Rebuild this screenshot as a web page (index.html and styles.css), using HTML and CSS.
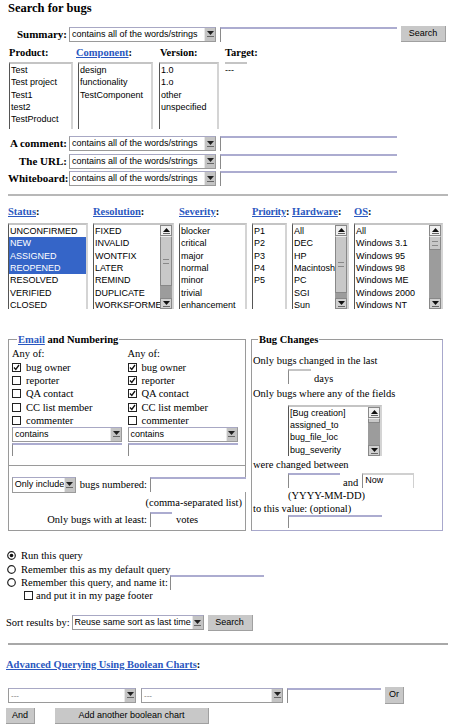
FILE: index.html
```html
<!DOCTYPE html>
<html>
<head>
<meta charset="utf-8">
<title>Search for bugs</title>
<link rel="stylesheet" href="styles.css">
</head>
<body>
<div class="page">
  <h1 class="title">Search for bugs</h1>

  <div class="row r-sum">
    <span class="lbl">Summary:</span>
    <div class="sel w147"><span class="v">contains all of the words/strings</span><span class="a"><svg width="7" height="6" viewBox="0 0 7 6"><path d="M0 0h7L3.5 4z" fill="#222"/><path d="M0 5.5h7" stroke="#666"/></svg></span></div>
    <div class="inp w177"></div>
    <div class="btn w45">Search</div>
  </div>

  <div class="prod">
    <div class="h pl1">Product:</div>
    <div class="h"><a class="lnk">Component</a>:</div>
    <div class="h pl1">Version:</div>
    <div class="h">Target:</div>
    <div class="lb ml1 w64 hp"><div>Test</div><div>Test project</div><div>Test1</div><div>test2</div><div>TestProduct</div></div>
    <div class="lb ml2 w75 hp"><div>design</div><div>functionality</div><div>TestComponent</div></div>
    <div class="lb w60 hp"><div>1.0</div><div>1.o</div><div>other</div><div>unspecified</div></div>
    <div class="lb lbt w22"><div>---</div></div>
  </div>

  <div class="frows">
    <div class="row">
      <span class="lbl">A comment:</span>
      <div class="sel w147"><span class="v">contains all of the words/strings</span><span class="a"><svg width="7" height="6" viewBox="0 0 7 6"><path d="M0 0h7L3.5 4z" fill="#222"/><path d="M0 5.5h7" stroke="#666"/></svg></span></div>
      <div class="inp w177"></div>
    </div>
    <div class="row">
      <span class="lbl">The URL:</span>
      <div class="sel w147"><span class="v">contains all of the words/strings</span><span class="a"><svg width="7" height="6" viewBox="0 0 7 6"><path d="M0 0h7L3.5 4z" fill="#222"/><path d="M0 5.5h7" stroke="#666"/></svg></span></div>
      <div class="inp w177"></div>
    </div>
    <div class="row">
      <span class="lbl">Whiteboard:</span>
      <div class="sel w147"><span class="v">contains all of the words/strings</span><span class="a"><svg width="7" height="6" viewBox="0 0 7 6"><path d="M0 0h7L3.5 4z" fill="#222"/><path d="M0 5.5h7" stroke="#666"/></svg></span></div>
      <div class="inp w177"></div>
    </div>
  </div>

  <div class="hr"></div>

  <div class="stat">
    <div class="scol w80">
      <div class="h"><a class="lnk">Status</a>:</div>
      <div class="lb hs">
        <div>UNCONFIRMED</div><div class="selr">NEW</div><div class="selr">ASSIGNED</div><div class="selr">REOPENED</div><div>RESOLVED</div><div>VERIFIED</div><div>CLOSED</div>
      </div>
    </div>
    <div class="scol w81">
      <div class="h"><a class="lnk">Resolution</a>:</div>
      <div class="lb hs sbx">
        <div class="items"><div>FIXED</div><div>INVALID</div><div>WONTFIX</div><div>LATER</div><div>REMIND</div><div>DUPLICATE</div><div>WORKSFORME</div></div>
        <div class="sb"><div class="up"><svg width="7" height="6" viewBox="0 0 7 6"><path d="M0 4h7L3.5 0z" fill="#111"/><path d="M0 5.5h7" stroke="#666"/></svg></div><div class="th th-res"><span class="grip"></span></div><div class="tr"></div><div class="dn"><svg width="7" height="6" viewBox="0 0 7 6"><path d="M0 0h7L3.5 4z" fill="#111"/><path d="M0 5.5h7" stroke="#666"/></svg></div></div>
      </div>
    </div>
    <div class="scol w68">
      <div class="h"><a class="lnk">Severity</a>:</div>
      <div class="lb hs"><div>blocker</div><div>critical</div><div>major</div><div>normal</div><div>minor</div><div>trivial</div><div>enhancement</div></div>
    </div>
    <div class="scol w35">
      <div class="h"><a class="lnk">Priority</a>:</div>
      <div class="lb hs"><div>P1</div><div>P2</div><div>P3</div><div>P4</div><div>P5</div></div>
    </div>
    <div class="scol w57">
      <div class="h"><a class="lnk">Hardware</a>:</div>
      <div class="lb hs sbx">
        <div class="items"><div>All</div><div>DEC</div><div>HP</div><div>Macintosh</div><div>PC</div><div>SGI</div><div>Sun</div></div>
        <div class="sb"><div class="up"><svg width="7" height="6" viewBox="0 0 7 6"><path d="M0 4h7L3.5 0z" fill="#111"/><path d="M0 5.5h7" stroke="#666"/></svg></div><div class="th th-hw"><span class="grip"></span></div><div class="tr"></div><div class="dn"><svg width="7" height="6" viewBox="0 0 7 6"><path d="M0 0h7L3.5 4z" fill="#111"/><path d="M0 5.5h7" stroke="#666"/></svg></div></div>
      </div>
    </div>
    <div class="scol w89">
      <div class="h"><a class="lnk">OS</a>:</div>
      <div class="lb hs sbx">
        <div class="items"><div>All</div><div>Windows 3.1</div><div>Windows 95</div><div>Windows 98</div><div>Windows ME</div><div>Windows 2000</div><div>Windows NT</div></div>
        <div class="sb"><div class="up"><svg width="7" height="6" viewBox="0 0 7 6"><path d="M0 4h7L3.5 0z" fill="#111"/><path d="M0 5.5h7" stroke="#666"/></svg></div><div class="th th-os"><span class="grip"></span></div><div class="tr"></div><div class="dn"><svg width="7" height="6" viewBox="0 0 7 6"><path d="M0 0h7L3.5 4z" fill="#111"/><path d="M0 5.5h7" stroke="#666"/></svg></div></div>
      </div>
    </div>
  </div>

  <div class="fsrow">
    <fieldset class="fs fs1">
      <legend><a class="lnk">Email</a> and Numbering</legend>
      <div class="ecols">
        <div class="ecol">
          <div class="any">Any of:</div>
          <div class="cb"><span class="box"><svg width="9" height="9" viewBox="0 0 9 9"><path d="M2 4.5l1.8 2L7 2" fill="none" stroke="#111" stroke-width="1.3"/></svg></span>bug owner</div>
          <div class="cb"><span class="box"></span>reporter</div>
          <div class="cb"><span class="box"></span>QA contact</div>
          <div class="cb"><span class="box"></span>CC list member</div>
          <div class="cb"><span class="box"></span>commenter</div>
          <div class="sel w110"><span class="v">contains</span><span class="a"><svg width="7" height="6" viewBox="0 0 7 6"><path d="M0 0h7L3.5 4z" fill="#222"/><path d="M0 5.5h7" stroke="#666"/></svg></span></div>
          <div class="inp w110 eh"></div>
        </div>
        <div class="ecol">
          <div class="any">Any of:</div>
          <div class="cb"><span class="box"><svg width="9" height="9" viewBox="0 0 9 9"><path d="M2 4.5l1.8 2L7 2" fill="none" stroke="#111" stroke-width="1.3"/></svg></span>bug owner</div>
          <div class="cb"><span class="box"><svg width="9" height="9" viewBox="0 0 9 9"><path d="M2 4.5l1.8 2L7 2" fill="none" stroke="#111" stroke-width="1.3"/></svg></span>reporter</div>
          <div class="cb"><span class="box"><svg width="9" height="9" viewBox="0 0 9 9"><path d="M2 4.5l1.8 2L7 2" fill="none" stroke="#111" stroke-width="1.3"/></svg></span>QA contact</div>
          <div class="cb"><span class="box"><svg width="9" height="9" viewBox="0 0 9 9"><path d="M2 4.5l1.8 2L7 2" fill="none" stroke="#111" stroke-width="1.3"/></svg></span>CC list member</div>
          <div class="cb"><span class="box"></span>commenter</div>
          <div class="sel w110"><span class="v">contains</span><span class="a"><svg width="7" height="6" viewBox="0 0 7 6"><path d="M0 0h7L3.5 4z" fill="#222"/><path d="M0 5.5h7" stroke="#666"/></svg></span></div>
          <div class="inp w110 eh"></div>
        </div>
      </div>
      <div class="sep"></div>
      <div class="num">
        <div class="nl"><div class="sel w64"><span class="v">Only include</span><span class="a"><svg width="7" height="6" viewBox="0 0 7 6"><path d="M0 0h7L3.5 4z" fill="#222"/><path d="M0 5.5h7" stroke="#666"/></svg></span></div><span class="bn">bugs numbered:</span></div>
        <div class="inp fullw"></div>
        <div class="csl">(comma-separated list)</div>
        <div class="nl nl2">Only bugs with at least:</div>
        <div class="vr"><div class="inp w22"></div><span class="votes">votes</span></div>
      </div>
    </fieldset>

    <fieldset class="fs fs2">
      <legend>Bug Changes</legend>
      <div class="t t1">Only bugs changed in the last</div>
      <div class="ind row"><div class="inp w23 hd"></div><span class="days">days</span></div>
      <div class="t t2">Only bugs where any of the fields</div>
      <div class="ind">
        <div class="lb sbx lbf">
          <div class="items"><div>[Bug creation]</div><div>assigned_to</div><div>bug_file_loc</div><div>bug_severity</div></div>
          <div class="sb"><div class="up"><svg width="7" height="6" viewBox="0 0 7 6"><path d="M0 4h7L3.5 0z" fill="#111"/><path d="M0 5.5h7" stroke="#666"/></svg></div><div class="th th-f"><span class="grip"></span></div><div class="tr"></div><div class="dn"><svg width="7" height="6" viewBox="0 0 7 6"><path d="M0 0h7L3.5 4z" fill="#111"/><path d="M0 5.5h7" stroke="#666"/></svg></div></div>
        </div>
      </div>
      <div class="t t3">were changed between</div>
      <div class="ind row dr"><div class="inp w52"></div><span class="and">and</span><div class="inp w52 now">Now</div></div>
      <div class="ind ymd">(YYYY-MM-DD)</div>
      <div class="t">to this value: (optional)</div>
      <div class="ind"><div class="inp w94 last"></div></div>
    </fieldset>
  </div>

  <div class="radios">
    <div class="rr"><svg class="rad" width="9" height="9" viewBox="0 0 9 9"><circle cx="4.5" cy="4.5" r="3.8" fill="#fff" stroke="#222" stroke-width="1.2"/><circle cx="4.5" cy="4.5" r="1.8" fill="#111"/></svg>Run this query</div>
    <div class="rr"><svg class="rad" width="9" height="9" viewBox="0 0 9 9"><circle cx="4.5" cy="4.5" r="3.8" fill="#fff" stroke="#222" stroke-width="1.2"/></svg>Remember this as my default query</div>
    <div class="rr"><svg class="rad" width="9" height="9" viewBox="0 0 9 9"><circle cx="4.5" cy="4.5" r="3.8" fill="#fff" stroke="#222" stroke-width="1.2"/></svg>Remember this query, and name it:<div class="inp w94 nm"></div></div>
    <div class="rr foot"><span class="box"></span>and put it in my page footer</div>
  </div>

  <div class="row sort">
    <span>Sort results by:</span>
    <div class="sel w132"><span class="v">Reuse same sort as last time</span><span class="a"><svg width="7" height="6" viewBox="0 0 7 6"><path d="M0 0h7L3.5 4z" fill="#222"/><path d="M0 5.5h7" stroke="#666"/></svg></span></div>
    <div class="btn w45">Search</div>
  </div>

  <div class="hr hr2"></div>

  <div class="adv"><a class="lnk">Advanced Querying Using Boolean Charts</a>:</div>

  <div class="row bc">
    <div class="sel w128 dash"><span class="v">---</span><span class="a"><svg width="7" height="6" viewBox="0 0 7 6"><path d="M0 0h7L3.5 4z" fill="#222"/><path d="M0 5.5h7" stroke="#666"/></svg></span></div>
    <div class="sel w142 dash"><span class="v">---</span><span class="a"><svg width="7" height="6" viewBox="0 0 7 6"><path d="M0 0h7L3.5 4z" fill="#222"/><path d="M0 5.5h7" stroke="#666"/></svg></span></div>
    <div class="inp w94"></div>
    <div class="btn w19">Or</div>
  </div>
  <div class="row bc2">
    <div class="btn w29">And</div>
    <div class="btn w154">Add another boolean chart</div>
  </div>
</div>
</body>
</html>
```

FILE: styles.css
```css
* { box-sizing: border-box; }
body { margin: 0; background: #fff; color: #000; font: 10.5px/13px "Liberation Serif", "Times New Roman", serif; }
.page { padding: 1px 0 0 8px; width: 450px; }
.title { margin: 0; font-size: 12.5px; font-weight: bold; line-height: 15px; }
.row { display: flex; align-items: center; }
.lnk { color: #2b58c0; text-decoration: underline; }

.lbl { width: 59px; margin-right: 2px; text-align: right; font-weight: bold; font-size: 11px; }

.sel { display: flex; height: 15px; background: #fff; border: 1px solid #9a9a9a; border-top-color: #a8a8c4; font: 9px/13px "Liberation Sans", Arial, sans-serif; flex: none; }
.sel .v { flex: 1; padding-left: 2px; white-space: nowrap; overflow: hidden; }
.sel .a { width: 11px; background: #c4c4c4; display: flex; align-items: center; justify-content: center; border-left: 1px solid #e8e8e8; }
.dash .v { color: #777; font-size: 8px; }

.inp { height: 15px; background: #fff; border-top: 2px solid #acacd0; border-left: 1px solid #8a8a8a; flex: none; font: 9px/13px "Liberation Sans", Arial, sans-serif; }
.btn { height: 16px; background: #c8c8c8; border-right: 1px solid #a0a0a0; border-bottom: 1px solid #a0a0a0; font: 9px/15px "Liberation Sans", Arial, sans-serif; text-align: center; flex: none; }

.w147 { width: 147px; } .w177 { width: 177px; } .w45 { width: 45px; } .w110 { width: 110px; }
.w64 { width: 64px; } .w75 { width: 75px; } .w60 { width: 60px; } .w22 { width: 22px; } .w23 { width: 23px; }
.w80 { width: 80px; } .w81 { width: 81px; } .w68 { width: 68px; } .w35 { width: 35px; } .w57 { width: 57px; } .w89 { width: 89px; }
.w52 { width: 52px; } .w94 { width: 94px; } .w132 { width: 132px; } .w128 { width: 128px; } .w142 { width: 142px; }
.w19 { width: 19px; } .w29 { width: 29px; } .w154 { width: 154px; }

.r-sum { margin-top: 10px; }
.r-sum .inp { margin-left: 4px; }
.r-sum .btn { margin-left: 4px; }

.prod { display: grid; grid-template-columns: 68px 83px 66px 1fr; margin-top: 5px; }
.h { font-weight: bold; font-size: 10.5px; line-height: 12px; white-space: nowrap; }
.pl1 { padding-left: 1px; }
.prod .lb { margin-top: 3px; }
.ml1 { margin-left: 1px; } .ml2 { margin-left: 2px; }

.lb { background: #fff; border-top: 2px solid #c4c4c4; border-left: 1px solid #555; border-right: 2px solid #d4d4d4; font: 9px/12.35px "Liberation Sans", Arial, sans-serif; padding-left: 1px; overflow: hidden; white-space: nowrap; }
.hp { height: 67px; }
.lbt { border-left: 0; border-right: 0; padding-left: 0; height: 14px; }
.hs { height: 86px; }

.frows { margin-top: 7px; display: flex; flex-direction: column; gap: 2.5px; }
.frows .inp { margin-left: 4px; }

.hr { height: 2px; background: #b8b8b8; width: 440px; margin-top: 8px; }

.stat { display: flex; gap: 5px; margin-top: 10px; }
.scol .lb { margin-top: 5px; }
.scol.w35 .h { letter-spacing: -0.2px; }
.selr { background: #3565c8; color: #fff; margin-left: -1px; padding-left: 1px; margin-right: -2px; }

.sbx { display: flex; padding-left: 0; }
.sbx .items { flex: 1; padding-left: 1px; overflow: hidden; }
.sb { width: 12px; display: flex; flex-direction: column; background: #9c9c9c; flex: none; }
.sb .up { height: 11px; background: #f0f0f0; border: 1px solid #888; display: flex; align-items: center; justify-content: center; }
.sb .dn { height: 11px; background: #d0d0d0; border: 1px solid #888; display: flex; align-items: center; justify-content: center; }
.sb .th { background: #c8c8c8; border: 1px solid #888; border-top-color: #eee; display: flex; align-items: center; justify-content: center; }
.sb .tr { flex: 1; }
.grip { width: 6px; height: 5px; border-top: 1px solid #888; border-bottom: 1px solid #888; }
.th-res { height: 50px; }
.th-hw { height: 57px; }
.th-os { height: 14px; }
.th-f { height: 5px; }
.th-f .grip { display: none; }

.fsrow { display: flex; gap: 5px; margin-top: 24px; align-items: stretch; }
.fs { margin: 0; border: 1px solid #9a9a9a; padding: 0 2px 0 3px; min-width: 0; }
.fs legend { font-weight: bold; line-height: 13px; padding: 0 1px; margin-left: 5px; }
.fs1 { width: 238px; padding-bottom: 3px; }
.fs2 { width: 192px; padding-left: 1px; padding-bottom: 0; border-right-color: #a8a8cc; border-bottom-color: #a8a8cc; }

.ecols { display: flex; }
.ecol { width: 118px; }
.any { line-height: 13px; margin-top: 1px; }
.cb { display: flex; align-items: center; height: 13.2px; white-space: nowrap; }
.any + .cb { margin-top: 1px; }
.box { width: 9px; height: 9px; border: 1px solid #222; background: #fff; margin-right: 5px; display: flex; align-items: center; justify-content: center; flex: none; }
.box svg { margin: -1px; }
.eh { height: 13px; margin-top: 1px; }
.sep { height: 1px; background: #9a9a9a; margin: 9px -2px 0 -3px; }

.num { display: grid; grid-template-columns: 135px 96px; column-gap: 3px; margin-top: 11px; align-items: center; }
.nl { display: flex; justify-content: flex-end; align-items: center; white-space: nowrap; }
.nl .sel { height: 16px; }
.bn { margin-left: 4px; }
.fullw { width: 96px; }
.csl { grid-column: 1 / 3; text-align: right; padding-right: 4px; line-height: 13px; margin-top: 3px; }
.vr { display: flex; align-items: center; margin-top: 3px; }
.nl2 { margin-top: 3px; }
.votes { margin-left: 4px; }

.t { line-height: 13px; }
.t1 { margin-top: 8px; }
.ind { padding-left: 35px; }
.hd { height: 15px; border-top-color: #c4c4c4; }
.days { margin-left: 3px; margin-top: 5px; }
.t2 { margin-top: 2px; }
.lbf { width: 94px; height: 51px; margin-top: 5px; }
.lbf .items div { line-height: 12.2px; }
.t3 { margin-top: 2px; }
.dr { margin-top: 1px; }
.and { margin-left: 3px; margin-right: 4px; margin-top: 4px; }
.now { border-top-color: #d0d0d0; border-right: 1px solid #d0d0d0; padding-left: 2px; line-height: 11px; }
.ymd { line-height: 13px; }
.last { height: 13px; }

.radios { margin-top: 18px; margin-left: -1px; }
.rr { display: flex; align-items: center; height: 13.4px; white-space: nowrap; }
.rad { margin-right: 5px; flex: none; }
.nm { margin-left: 2px; }
.foot { padding-left: 17px; }
.foot .box { margin-right: 3px; }

.sort { margin-top: 12px; margin-left: -2px; }
.sort .sel { margin-left: 2px; }
.sort .btn { margin-left: 4px; }

.hr2 { margin-top: 12px; background: #a8a8a8; }

.adv { margin-top: 13px; margin-left: -2px; font-weight: bold; line-height: 14px; }

.bc { margin-top: 15px; }
.bc .sel:nth-child(2) { margin-left: 5px; }
.bc .inp { margin-left: 4px; }
.bc .btn { margin-left: 4px; height: 17px; }
.bc2 { margin-top: 4px; margin-left: -2px; }
.bc2 .btn:nth-child(2) { margin-left: 20px; }
```
